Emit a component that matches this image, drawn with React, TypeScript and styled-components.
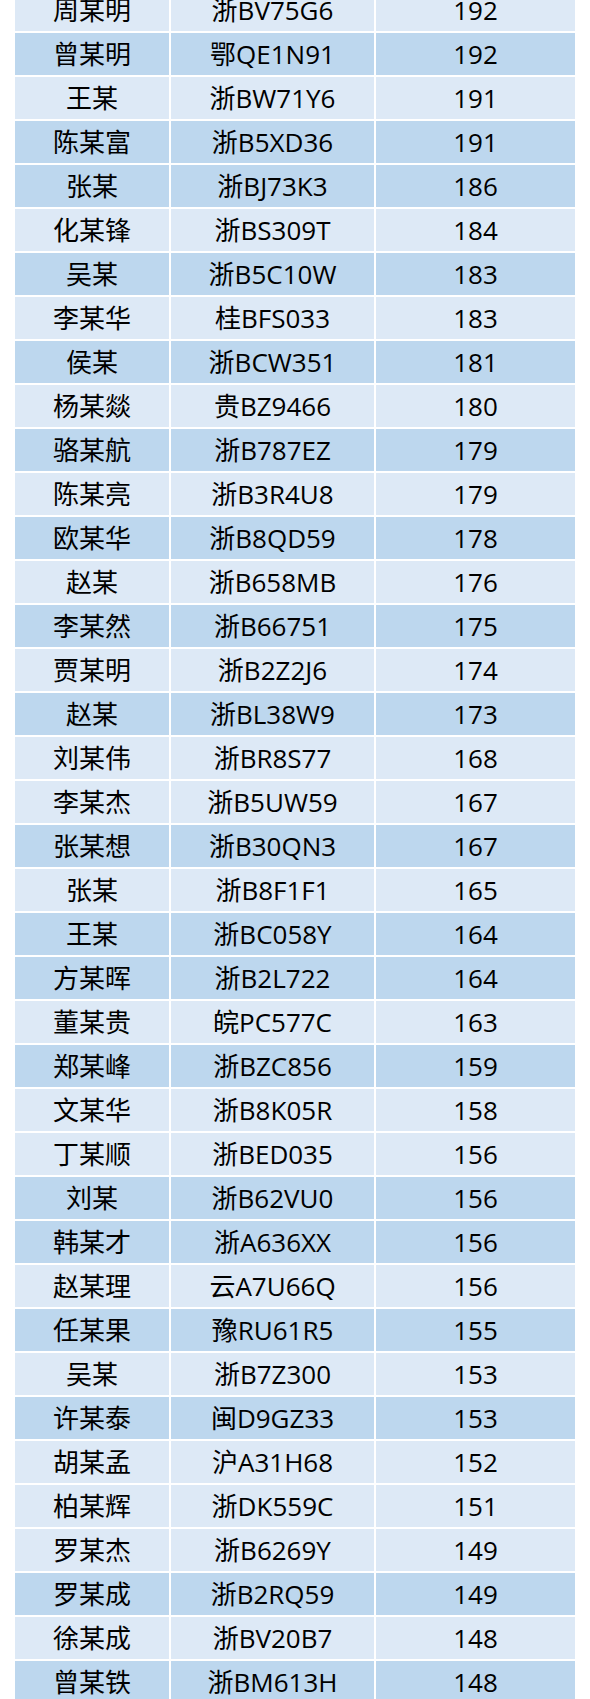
import React from "react";
import styled, { createGlobalStyle } from "styled-components";

const Global = createGlobalStyle`
  html, body { margin: 0; padding: 0; background: #ffffff; }
  body { font-family: "Open Sans", "Noto Sans CJK SC", sans-serif; overflow: hidden; }
`;

const Page = styled.div`
  width: 590px;
  height: 1699px;
  overflow: hidden;
  padding-left: 15px;
  box-sizing: border-box;
`;

const Table = styled.div`
  margin-top: -11px;
  width: 560px;
  display: flex;
  flex-direction: column;
  gap: 2px;
`;

const Row = styled.div<{ $dark: boolean }>`
  display: grid;
  grid-template-columns: 154px 203px 199px;
  gap: 2px;
  height: 42px;
  color: #000;
  font-size: 26px;
  & > div {
    background: ${(p) => (p.$dark ? "#bdd7ee" : "#dde9f6")};
  }
`;

const Cell = styled.div`
  display: flex;
  align-items: center;
  justify-content: center;
  line-height: 1;
  white-space: nowrap;
  font-family: "Open Sans", "Noto Sans CJK SC", sans-serif;
`;

type R = [string, string, number, boolean];

const rows: R[] = [
  ["周某明", "浙BV75G6", 192, false],
  ["曾某明", "鄂QE1N91", 192, true],
  ["王某", "浙BW71Y6", 191, false],
  ["陈某富", "浙B5XD36", 191, true],
  ["张某", "浙BJ73K3", 186, true],
  ["化某锋", "浙BS309T", 184, false],
  ["吴某", "浙B5C10W", 183, true],
  ["李某华", "桂BFS033", 183, false],
  ["侯某", "浙BCW351", 181, true],
  ["杨某燚", "贵BZ9466", 180, false],
  ["骆某航", "浙B787EZ", 179, true],
  ["陈某亮", "浙B3R4U8", 179, false],
  ["欧某华", "浙B8QD59", 178, true],
  ["赵某", "浙B658MB", 176, false],
  ["李某然", "浙B66751", 175, true],
  ["贾某明", "浙B2Z2J6", 174, false],
  ["赵某", "浙BL38W9", 173, true],
  ["刘某伟", "浙BR8S77", 168, false],
  ["李某杰", "浙B5UW59", 167, false],
  ["张某想", "浙B30QN3", 167, true],
  ["张某", "浙B8F1F1", 165, false],
  ["王某", "浙BC058Y", 164, true],
  ["方某晖", "浙B2L722", 164, true],
  ["董某贵", "皖PC577C", 163, false],
  ["郑某峰", "浙BZC856", 159, true],
  ["文某华", "浙B8K05R", 158, false],
  ["丁某顺", "浙BED035", 156, false],
  ["刘某", "浙B62VU0", 156, true],
  ["韩某才", "浙A636XX", 156, true],
  ["赵某理", "云A7U66Q", 156, false],
  ["任某果", "豫RU61R5", 155, true],
  ["吴某", "浙B7Z300", 153, false],
  ["许某泰", "闽D9GZ33", 153, true],
  ["胡某孟", "沪A31H68", 152, false],
  ["柏某辉", "浙DK559C", 151, false],
  ["罗某杰", "浙B6269Y", 149, false],
  ["罗某成", "浙B2RQ59", 149, true],
  ["徐某成", "浙BV20B7", 148, false],
  ["曾某铁", "浙BM613H", 148, true],
];

export default function App() {
  return (
    <>
      <Global />
      <Page>
        <Table>
          {rows.map(([name, plate, score, dark], i) => (
            <Row key={i} $dark={dark}>
              <Cell>{name}</Cell>
              <Cell>{plate}</Cell>
              <Cell>{score}</Cell>
            </Row>
          ))}
        </Table>
      </Page>
    </>
  );
}
